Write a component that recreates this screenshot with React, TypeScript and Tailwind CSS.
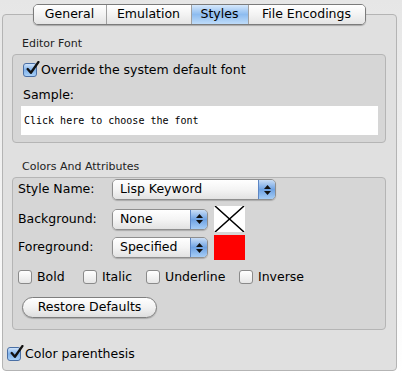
import React from 'react';

const font = { fontFamily: '"DejaVu Sans", "Lucida Grande", sans-serif' };

const Check = ({ checked }: { checked?: boolean }) => (
  <span
    className={
      'relative inline-flex h-[14px] w-[14px] shrink-0 items-center justify-center rounded-[3px] border ' +
      (checked
        ? 'border-[#4a6fa5] bg-gradient-to-b from-[#cfe3fa] via-[#7fb1ea] to-[#a9d0f7]'
        : 'border-[#8a8a8a] bg-gradient-to-b from-[#ffffff] to-[#e6e6e6]')
    }
  >
    {checked && (
      <svg viewBox="0 0 14 14" className="absolute -top-[3px] left-[1px] h-[15px] w-[15px]">
        <path d="M2.5 7.5 L5.5 11 L12.5 1" fill="none" stroke="#111" strokeWidth="2.2" strokeLinecap="round" strokeLinejoin="round" />
      </svg>
    )}
  </span>
);

const Popup = ({ label, w }: { label: string; w: string }) => (
  <div className={`flex h-[21px] ${w} items-stretch overflow-hidden rounded-[5px] border border-[#8e8e8e] shadow-[0_1px_1px_rgba(0,0,0,0.2)]`}>
    <div className="flex flex-1 items-center bg-gradient-to-b from-[#ffffff] via-[#f4f4f4] to-[#e2e2e2] pl-[7px] text-[12.5px] text-black">
      {label}
    </div>
    <div className="flex w-[17px] flex-col items-center justify-center gap-[2px] border-l border-[#5d86c4] bg-gradient-to-b from-[#c9ddf5] via-[#6ea2e3] to-[#a6cdf5]">
      <svg width="7" height="4" viewBox="0 0 7 4"><path d="M0 4 L3.5 0 L7 4 Z" fill="#111" /></svg>
      <svg width="7" height="4" viewBox="0 0 7 4"><path d="M0 0 L3.5 4 L7 0 Z" fill="#111" /></svg>
    </div>
  </div>
);

const tabs = ['General', 'Emulation', 'Styles', 'File Encodings'];

export default function App() {
  return (
    <div className="h-[376px] w-[402px] bg-gradient-to-b from-[#e6e6e6] to-[#ffffff] pt-[4px] text-black" style={font}>
      {/* tab strip */}
      <div className="relative z-10 flex justify-center pr-[4px]">
        <div className="flex h-[21px] overflow-hidden rounded-[5px] border border-[#7b7b7b] shadow-[0_1px_1px_rgba(0,0,0,0.25)]">
          {tabs.map((t, i) => (
            <div
              key={t}
              className={
                'flex items-center justify-center text-[12.5px] ' +
                (i > 0 ? 'border-l border-[#a0a0a0] ' : '') +
                (t === 'Styles'
                  ? 'w-[57px] bg-gradient-to-b from-[#d6e8fb] via-[#8dbcf0] to-[#bfdcf9]'
                  : 'bg-gradient-to-b from-[#ffffff] via-[#f3f3f3] to-[#e4e4e4] ' +
                    (t === 'General' ? 'w-[72px]' : t === 'Emulation' ? 'w-[85px]' : 'w-[117px]'))
              }
            >
              {t}
            </div>
          ))}
        </div>
      </div>

      {/* tab panel */}
      <div className="ml-[2px] mr-[5px] -mt-[11px] h-[357px] rounded-[4px] border border-[#b4b4b4] bg-[#e0e0e0] pl-[9px] pr-[10px] pt-[22px]">
        <div className="h-[14px] pl-[10px] text-[11px] leading-[14px] text-[#222]">Editor Font</div>
        <div className="mt-[3px] h-[89px] rounded-[4px] border border-[#b5b5b5] bg-[#d6d6d6] px-[10px] pt-[7px]">
          <div className="flex h-[16px] items-center gap-[4px] text-[12.5px]">
            <Check checked />
            <span>Override the system default font</span>
          </div>
          <div className="mt-[9px] h-[16px] text-[12.5px] leading-[16px]">Sample:</div>
          <div
            className="-ml-[2px] mt-[3px] flex h-[29px] w-[357px] items-center bg-white pl-[3px] text-[10px]"
            style={{ fontFamily: '"DejaVu Sans Mono", monospace' }}
          >
            Click here to choose the font
          </div>
        </div>

        <div className="mt-[17px] h-[14px] pl-[10px] text-[11px] leading-[14px] text-[#222]">Colors And Attributes</div>
        <div className="mt-[3px] h-[153px] rounded-[4px] border border-[#b5b5b5] bg-[#d6d6d6] px-[5px] pt-[1px]">
          <div className="flex h-[21px] items-center">
            <span className="w-[94px] text-[12.5px]">Style Name:</span>
            <Popup label="Lisp Keyword" w="w-[164px]" />
          </div>
          <div className="mt-[6px] flex h-[26px] items-center">
            <span className="w-[94px] text-[12.5px]">Background:</span>
            <Popup label="None" w="w-[96px]" />
            <svg className="ml-[6px]" width="31" height="26" viewBox="0 0 31 26">
              <rect width="31" height="26" fill="#fff" />
              <path d="M1 0 L30 26 M30 0 L1 26" stroke="#000" strokeWidth="1.5" />
            </svg>
          </div>
          <div className="mt-[3px] flex h-[25px] items-center">
            <span className="w-[94px] text-[12.5px]">Foreground:</span>
            <Popup label="Specified" w="w-[96px]" />
            <div className="ml-[6px] h-[25px] w-[31px] bg-[#ff0000]" />
          </div>
          <div className="mt-[9px] flex h-[16px] items-center text-[12.5px]">
            <label className="flex w-[65px] items-center gap-[5px]"><Check />Bold</label>
            <label className="flex w-[63px] items-center gap-[5px]"><Check />Italic</label>
            <label className="flex w-[93px] items-center gap-[5px]"><Check />Underline</label>
            <label className="flex items-center gap-[5px]"><Check />Inverse</label>
          </div>
          <button className="ml-[4px] mt-[12px] flex h-[21px] w-[135px] items-center justify-center rounded-full border border-[#7f7f7f] bg-gradient-to-b from-[#ffffff] via-[#f2f2f2] to-[#dedede] text-[12.5px] shadow-[0_1px_1px_rgba(0,0,0,0.2)]">
            Restore Defaults
          </button>
        </div>

        <div className="-ml-[5px] mt-[16px] flex h-[16px] items-center gap-[4px] text-[12.5px]">
          <Check checked />
          <span>Color parenthesis</span>
        </div>
      </div>
    </div>
  );
}
